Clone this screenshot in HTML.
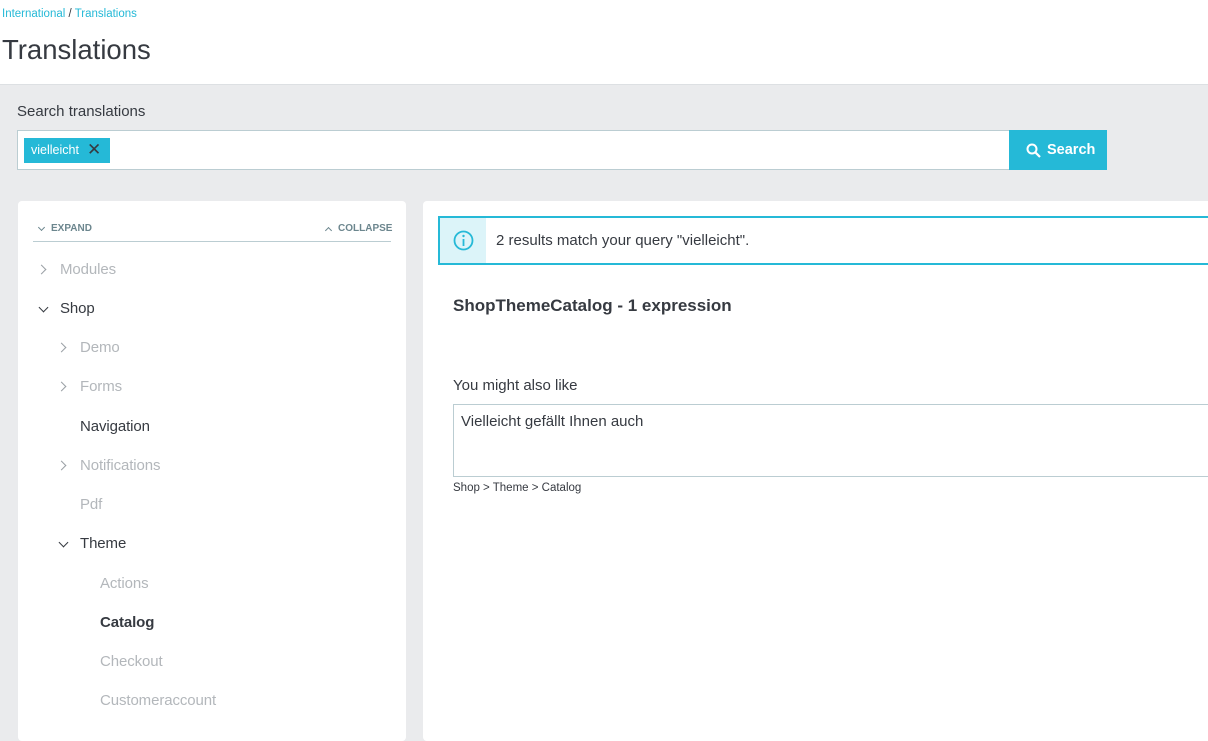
<!DOCTYPE html>
<html><head><style>
*{margin:0;padding:0;box-sizing:border-box}
body{width:1208px;height:729px;overflow:hidden;background:#eaebed;font-family:"Liberation Sans",sans-serif;color:#363a41;position:relative}
.a{position:absolute;white-space:nowrap}
.hdr{left:0;top:0;width:1208px;height:85px;background:#fff;border-bottom:1px solid #dde0e3}
.t{font-size:14.5px}
.tree{font-size:15px;letter-spacing:-0.1px}
.g{color:#b3b7bb}
.chev{position:absolute;width:7px;height:7px;border-right:1.6px solid #9aa0a5;border-bottom:1.6px solid #9aa0a5}
.sc{position:absolute;width:5px;height:5px;border-right:1.5px solid #6c868e;border-bottom:1.5px solid #6c868e}
</style></head><body>
<div class="a hdr"></div>
<div class="a" style="left:2px;top:8px;font-size:11.5px;color:#25b9d7">International <span style="color:#363a41">/</span> Translations</div>
<div class="a" style="left:2px;top:34px;font-size:27.5px;color:#363a41">Translations</div>
<div class="a" style="left:17px;top:103px;font-size:15px">Search translations</div>
<div class="a" style="left:17px;top:130px;width:993px;height:40px;background:#fff;border:1px solid #bbcdd2"></div>
<div class="a" style="left:24px;top:138px;width:86px;height:25px;background:#25b9d7;color:#fff;font-size:12.5px;padding:5px 0 0 7px">vielleicht<span style="position:absolute;left:63px;top:2px;color:#363a41;font-size:17px">✕</span></div>
<div class="a" style="left:1009px;top:130px;width:98px;height:40px;background:#25b9d7;color:#fff;font-size:14.5px;font-weight:bold;padding:12px 0 0 17px">
<svg style="position:absolute;left:17px;top:13px" width="15" height="15" viewBox="0 0 15 15"><circle cx="6" cy="6" r="4.5" fill="none" stroke="#fff" stroke-width="2"/><path d="M9.3 9.3L14 14" stroke="#fff" stroke-width="2.2"/></svg>
<span style="margin-left:21px">Search</span></div>

<div class="a" style="left:18px;top:201px;width:388px;height:540px;background:#fff;border-radius:4px"></div>
<div class="a" style="left:33px;top:241px;width:358px;height:1px;background:#bbcdd2"></div>
<span class="sc" style="left:39px;top:225px;transform:rotate(45deg)"></span>
<div class="a" style="left:51px;top:223px;font-size:10px;font-weight:bold;color:#6c868e">EXPAND</div>
<span class="sc" style="left:326px;top:228px;transform:rotate(-135deg)"></span>
<div class="a" style="left:338px;top:223px;font-size:10px;font-weight:bold;color:#6c868e">COLLAPSE</div>
<span class="chev" style="left:38px;top:266px;transform:rotate(-45deg)"></span>
<div class="a tree g" style="left:60px;top:261px">Modules</div>
<span class="chev" style="left:40px;top:304px;transform:rotate(45deg);border-color:#363a41"></span>
<div class="a tree" style="left:60px;top:300px">Shop</div>
<span class="chev" style="left:58px;top:344px;transform:rotate(-45deg)"></span>
<div class="a tree g" style="left:80px;top:339px">Demo</div>
<span class="chev" style="left:58px;top:383px;transform:rotate(-45deg)"></span>
<div class="a tree g" style="left:80px;top:378px">Forms</div>
<div class="a tree" style="left:80px;top:418px">Navigation</div>
<span class="chev" style="left:58px;top:462px;transform:rotate(-45deg)"></span>
<div class="a tree g" style="left:80px;top:457px">Notifications</div>
<div class="a tree g" style="left:80px;top:496px">Pdf</div>
<span class="chev" style="left:60px;top:539px;transform:rotate(45deg);border-color:#363a41"></span>
<div class="a tree" style="left:80px;top:535px">Theme</div>
<div class="a tree g" style="left:100px;top:575px">Actions</div>
<div class="a tree" style="left:100px;top:614px;font-weight:bold">Catalog</div>
<div class="a tree g" style="left:100px;top:653px">Checkout</div>
<div class="a tree g" style="left:100px;top:692px">Customeraccount</div>

<div class="a" style="left:423px;top:201px;width:800px;height:540px;background:#fff;border-radius:4px"></div>
<div class="a" style="left:438px;top:216px;width:780px;height:49px;border:2px solid #25b9d7;background:#fff"></div>
<div class="a" style="left:440px;top:218px;width:46px;height:45px;background:#dcf4f9"></div>
<svg class="a" style="left:453px;top:230px" width="21" height="21" viewBox="0 0 21 21"><circle cx="10.5" cy="10.5" r="9" fill="none" stroke="#25b9d7" stroke-width="1.8"/><circle cx="10.5" cy="6" r="1.2" fill="#25b9d7"/><path d="M10.5 9v7" stroke="#25b9d7" stroke-width="1.8"/></svg>
<div class="a" style="left:496px;top:232px;font-size:15px">2 results match your query "vielleicht".</div>
<div class="a" style="left:453px;top:296px;font-size:17px;font-weight:bold">ShopThemeCatalog - 1 expression</div>
<div class="a" style="left:453px;top:377px;font-size:15px">You might also like</div>
<div class="a" style="left:453px;top:404px;width:770px;height:73px;border:1px solid #bbcdd2;background:#fff"></div>
<div class="a" style="left:461px;top:413px;font-size:15px">Vielleicht gefällt Ihnen auch</div>
<div class="a" style="left:453px;top:482px;font-size:11.5px">Shop &gt; Theme &gt; Catalog</div>
</body></html>
